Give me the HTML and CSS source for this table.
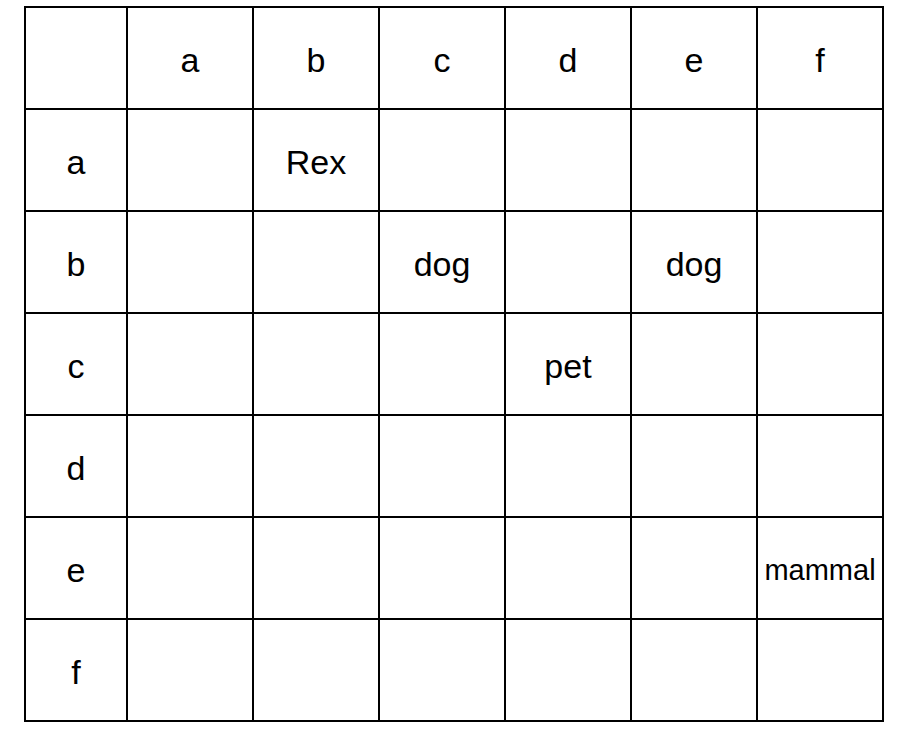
FILE: index.html
```html
<!DOCTYPE html>
<html>
<head>
<meta charset="utf-8">
<link rel="stylesheet" href="styles.css">
</head>
<body>
<div class="grid">
  <div class="cell"></div><div class="cell">a</div><div class="cell">b</div><div class="cell">c</div><div class="cell">d</div><div class="cell">e</div><div class="cell">f</div>
  <div class="cell">a</div><div class="cell"></div><div class="cell">Rex</div><div class="cell"></div><div class="cell"></div><div class="cell"></div><div class="cell"></div>
  <div class="cell">b</div><div class="cell"></div><div class="cell"></div><div class="cell">dog</div><div class="cell"></div><div class="cell">dog</div><div class="cell"></div>
  <div class="cell">c</div><div class="cell"></div><div class="cell"></div><div class="cell"></div><div class="cell">pet</div><div class="cell"></div><div class="cell"></div>
  <div class="cell">d</div><div class="cell"></div><div class="cell"></div><div class="cell"></div><div class="cell"></div><div class="cell"></div><div class="cell"></div>
  <div class="cell">e</div><div class="cell"></div><div class="cell"></div><div class="cell"></div><div class="cell"></div><div class="cell"></div><div class="cell small">mammal</div>
  <div class="cell">f</div><div class="cell"></div><div class="cell"></div><div class="cell"></div><div class="cell"></div><div class="cell"></div><div class="cell"></div>
</div>
</body>
</html>
```
FILE: styles.css
```css
html, body {
  margin: 0;
  padding: 0;
  background: #fff;
}
body {
  padding: 6px 0 0 24px;
  font-family: "Liberation Sans", Arial, sans-serif;
}
.grid {
  display: grid;
  grid-template-columns: 100px repeat(6, 124px);
  grid-auto-rows: 100px;
  gap: 2px;
  padding: 2px;
  background: #000;
  width: max-content;
}
.cell {
  background: #fff;
  display: flex;
  align-items: center;
  justify-content: center;
  padding-top: 4px;
  font-size: 34px;
  color: #000;
}
.cell.small {
  font-size: 29px;
}
```
